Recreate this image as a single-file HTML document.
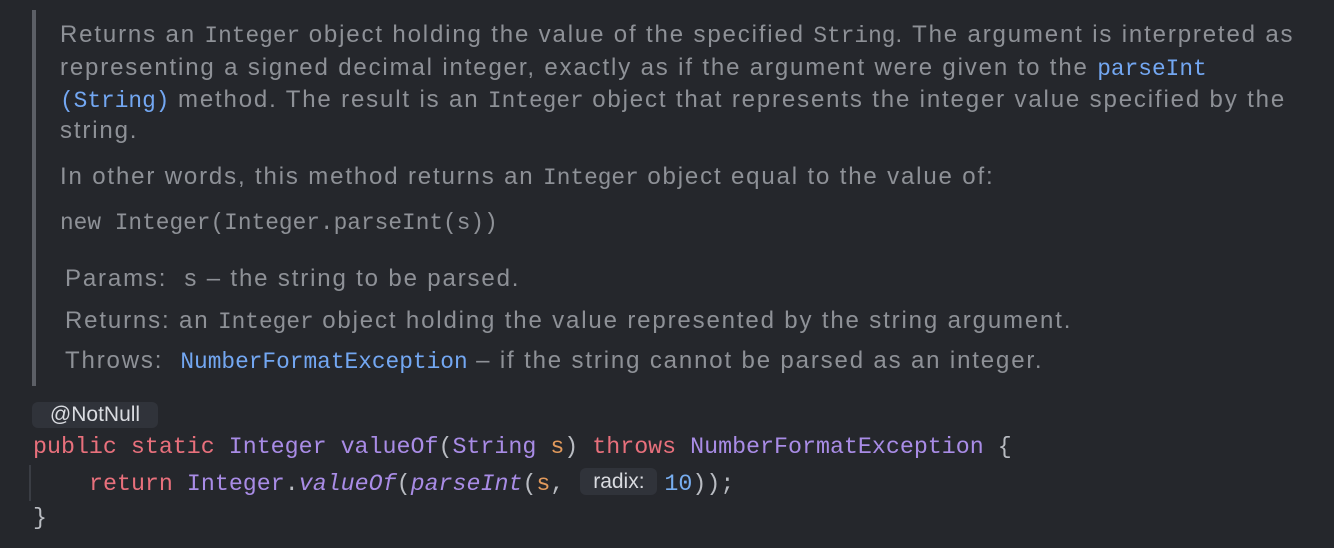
<!DOCTYPE html>
<html><head><meta charset="utf-8"><style>
html,body{margin:0;padding:0;}
body{width:1334px;height:548px;background:#25272c;position:relative;overflow:hidden;font-family:"Liberation Sans",sans-serif;}
.l{position:absolute;white-space:pre;height:32px;line-height:32px;font-size:24px;letter-spacing:1.85px;color:#8e9197;}
.m{font-family:"Liberation Mono",monospace;font-size:22.8px;letter-spacing:0;}
.a{color:#73a7f2;}
.c{position:absolute;white-space:pre;font-family:"Liberation Mono",monospace;font-size:23.3px;line-height:32px;color:#b9bcc2;}
.k{color:#e8707c;} .t{color:#a98ce6;} .p{color:#e39a5c;} .n{color:#78aef0;} .i{font-style:italic;color:#a98ce6;}
.pill{position:absolute;background:#30333a;border-radius:6px;color:#d9dbe0;font-family:"Liberation Sans",sans-serif;font-size:21px;line-height:26px;text-align:center;}
.ip{display:inline-block;vertical-align:middle;background:#30333a;border-radius:6px;color:#d9dbe0;font-family:"Liberation Sans",sans-serif;font-size:21px;line-height:27px;height:27px;width:77px;text-align:center;margin:-4px 7px 0 16px;font-style:normal;}
</style></head><body>
<div style="position:absolute;left:32px;top:10px;width:4px;height:376px;background:#5c5f66"></div>
<div class="l" style="left:60px;top:19px">Returns an <span class="m">Integer</span> object holding the value of the specified <span class="m">String</span>. The argument is interpreted as</div>
<div class="l" style="left:60px;top:52px">representing a signed decimal integer, exactly as if the argument were given to the <span class="m a">parseInt</span></div>
<div class="l" style="left:60px;top:84px"><span class="m a">(String)</span> method. The result is an <span class="m">Integer</span> object that represents the integer value specified by the</div>
<div class="l" style="left:60px;top:115px">string.</div>
<div class="l" style="left:60px;top:161px">In other words, this method returns an <span class="m">Integer</span> object equal to the value of:</div>
<div class="l m" style="left:60px;top:207px">new Integer(Integer.parseInt(s))</div>
<div class="l" style="left:65px;top:263px">Params:  s – the string to be parsed.</div>
<div class="l" style="left:65px;top:305px">Returns: an <span class="m">Integer</span> object holding the value represented by the string argument.</div>
<div class="l" style="left:65px;top:345px">Throws:  <span class="m a">NumberFormatException</span> – if the string cannot be parsed as an integer.</div>
<div class="pill" style="left:32px;top:402px;width:126px;height:26px">@NotNull</div>
<div class="c" style="left:33px;top:431px"><span class="k">public static </span><span class="t">Integer valueOf</span>(<span class="t">String</span> <span class="p">s</span>) <span class="k">throws </span><span class="t">NumberFormatException</span> {</div>
<div style="position:absolute;left:29px;top:465px;width:2px;height:36px;background:#3a3d44"></div>
<div class="c" style="left:89px;top:468px"><span class="k">return </span><span class="t">Integer</span>.<span class="i">valueOf</span>(<span class="i">parseInt</span>(<span class="p">s</span>,<span class="ip">radix:</span><span class="n">10</span>));</div>
<div class="c" style="left:33px;top:502px">}</div>
</body></html>
